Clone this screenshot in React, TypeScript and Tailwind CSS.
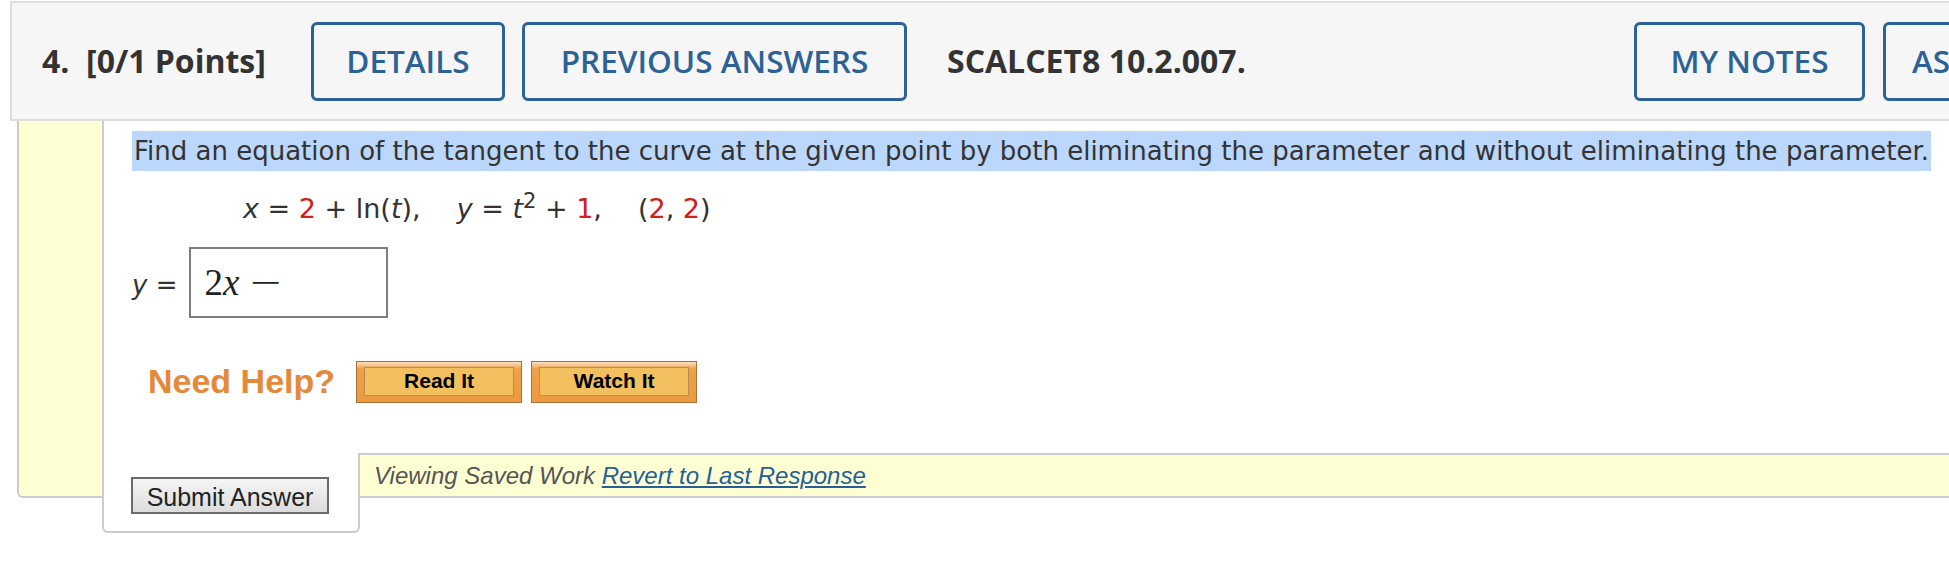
// Question panel (WebAssign style)
const openSans = "font-[family-name:'Open_Sans',sans-serif]";
const verdana = "font-[family-name:'DejaVu_Sans',Verdana,sans-serif]";
const arial = "font-[family-name:'Liberation_Sans',Arial,sans-serif]";
const times = "font-[family-name:'Liberation_Serif','Times_New_Roman',serif]";

function OutlineButton({ label, width }: { label: string; width: string }) {
  return (
    <button
      className={`${width} h-[79px] shrink-0 rounded-[6px] border-[3px] border-[#2c6295] bg-transparent text-[31.5px] font-semibold whitespace-nowrap text-[#2c6295]`}
    >
      {label}
    </button>
  );
}

function HelpButton({ label }: { label: string }) {
  return (
    <button className="h-[42px] w-[166px] border border-[#a9743a] bg-[linear-gradient(#fadfc0,#efa047_18%,#ec9a3f)] px-[7px] pt-[5px] pb-[6px]">
      <span className={`${arial} flex h-full items-center justify-center border border-[#bd894c] bg-[#f3c05f] text-[21px] font-bold text-black`}>
        {label}
      </span>
    </button>
  );
}

const Red = ({ children }: { children: React.ReactNode }) => <span className="text-[#d0201b]">{children}</span>;

export default function App() {
  return (
    <div className="h-[565px] w-[1949px] overflow-hidden bg-white">
      <header className={`${openSans} mt-px ml-[10px] flex h-[120px] w-[2600px] items-center border-2 border-[#dddddd] bg-[#f6f6f6] pl-[30px] text-[#333]`}>
        <div className="flex w-[1592px] shrink-0 items-center">
          <span className="w-[269px] shrink-0 text-[32px] font-bold whitespace-pre">4.  [0/1 Points]</span>
          <OutlineButton label="DETAILS" width="w-[194px]" />
          <span className="w-[17px] shrink-0" />
          <OutlineButton label="PREVIOUS ANSWERS" width="w-[385px]" />
          <span className="ml-[40px] text-[32px] font-bold">SCALCET8 10.2.007.</span>
        </div>
        <div className="flex gap-[18px]">
          <OutlineButton label="MY NOTES" width="w-[231px]" />
          <OutlineButton label="ASK YOUR TEACHER" width="px-[26px]" />
          <OutlineButton label="PRACTICE ANOTHER" width="px-[26px]" />
        </div>
      </header>

      <section className="ml-[17px] flex w-[2600px] rounded-bl-[6px] border-b-2 border-l-2 border-[#cccccc] bg-[#ffffd4]">
        <div className="w-[83px] shrink-0" />
        <div className="flex flex-1 flex-col">
          <div className={`${verdana} h-[332px] border-l-2 border-[#cccccc] bg-white pt-[10px] pl-[28px] text-[#333]`}>
            <p className="text-[26px] leading-[40px]">
              <span className="inline-block bg-[#bbd7fb] pr-[2px] pl-[2px]">
                Find an equation of the tangent to the curve at the given point by both eliminating the parameter and without eliminating the parameter.
              </span>
            </p>

            <div className="mt-[18px] ml-[111px] text-[27px] leading-[40px]">
              <span className="italic">x</span> = <Red>2</Red> + ln(<span className="italic">t</span>),
              <span className="ml-[36px] italic">y</span> = <span className="italic">t</span>
              <sup className="text-[21px]">2</sup> + <Red>1</Red>,
              <span className="ml-[36px]">(<Red>2</Red>, <Red>2</Red>)</span>
            </div>

            <div className="mt-[18px] flex items-center">
              <span className="pt-[6px] text-[26px]">
                <span className="italic">y</span> =
              </span>
              <div className={`${times} ml-[12px] flex h-[71px] w-[199px] items-center border-2 border-[#7f7f7f] pl-[13px] text-[37px] text-[#222]`}>
                2<span className="italic">x</span>
                <span className="ml-[11px] inline-block origin-left scale-x-150">−</span>
              </div>
            </div>

            <div className="mt-[38px] ml-[16px] flex items-center gap-[9px]">
              <span className={`${arial} mr-[12px] text-[34px] font-bold text-[#e4893a]`}>Need Help?</span>
              <HelpButton label="Read It" />
              <HelpButton label="Watch It" />
            </div>
          </div>

          <div className="flex h-[43px]">
            <div className="h-[80px] w-[258px] shrink-0 rounded-b-[6px] border-x-2 border-b-2 border-[#cccccc] bg-white pt-[24px] pl-[27px]">
              <button className={`${arial} h-[37px] w-[198px] border-2 border-[#6b6b6b] bg-[linear-gradient(#f5f5f5,#dcdcdc)] text-[25px] text-[#222]`}>
                Submit Answer
              </button>
            </div>
            <div className={`${arial} flex-1 border-t-2 border-[#cccccc] pt-[3px] pl-[14px] text-[24px] italic text-[#555]`}>
              Viewing Saved Work <a className="text-[#245f98] underline">Revert to Last Response</a>
            </div>
          </div>
        </div>
      </section>
    </div>
  );
}
